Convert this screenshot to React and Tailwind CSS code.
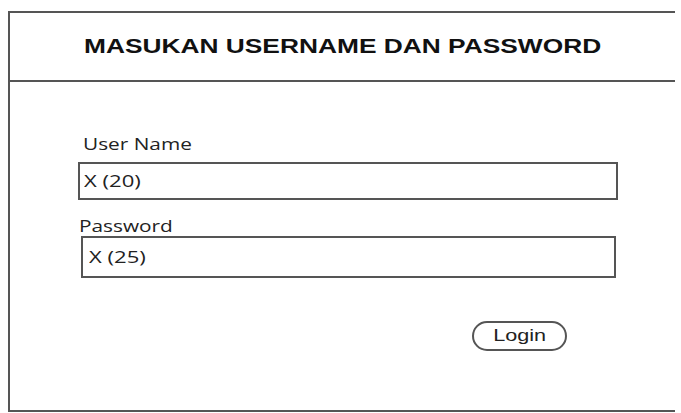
export default function App() {
  return (
    <div className="w-[681px] h-[413px] bg-white pt-[11px] pl-[8px]">
      <div className="w-[667px] h-[401px] border-l-2 border-t-2 border-b-2 border-[#555] flex flex-col">
        {/* Header */}
        <div className="h-[69px] border-b-2 border-[#555] flex items-center justify-center">
          <h1 className="inline-block origin-center scale-x-[1.35] font-['Liberation_Sans',Arial,sans-serif] font-bold text-[19.5px] text-[#111]">
            MASUKAN USERNAME DAN PASSWORD
          </h1>
        </div>

        {/* Form */}
        <div className="flex-1 font-['Open_Sans',sans-serif] text-[#222]">
          <div className="pl-[73px] pt-[53px] text-[16px] leading-[18px]">
            <span className="inline-block origin-left scale-x-[1.3]">User Name</span>
          </div>
          <div className="ml-[68px] mt-[9px] w-[540px] h-[38px] border-2 border-[#555] flex items-center pl-[4px] text-[16px]">
            <span className="inline-block origin-left scale-x-[1.38]">X (20)</span>
          </div>
          <div className="pl-[69px] mt-[17px] text-[16px] leading-[18px]">
            <span className="inline-block origin-left scale-x-[1.3]">Password</span>
          </div>
          <div className="ml-[71px] mt-[1px] w-[535px] h-[42px] border-2 border-[#555] flex items-center pl-[6px] text-[16px]">
            <span className="inline-block origin-left scale-x-[1.38]">X (25)</span>
          </div>
          <div className="flex justify-end pr-[108px] mt-[43px]">
            <button className="w-[95px] h-[30px] rounded-full border-2 border-[#555] text-[16px] font-['Liberation_Sans',Arial,sans-serif] text-[#222]">
              <span className="inline-block origin-center scale-x-[1.35]">Login</span>
            </button>
          </div>
        </div>
      </div>
    </div>
  )
}
